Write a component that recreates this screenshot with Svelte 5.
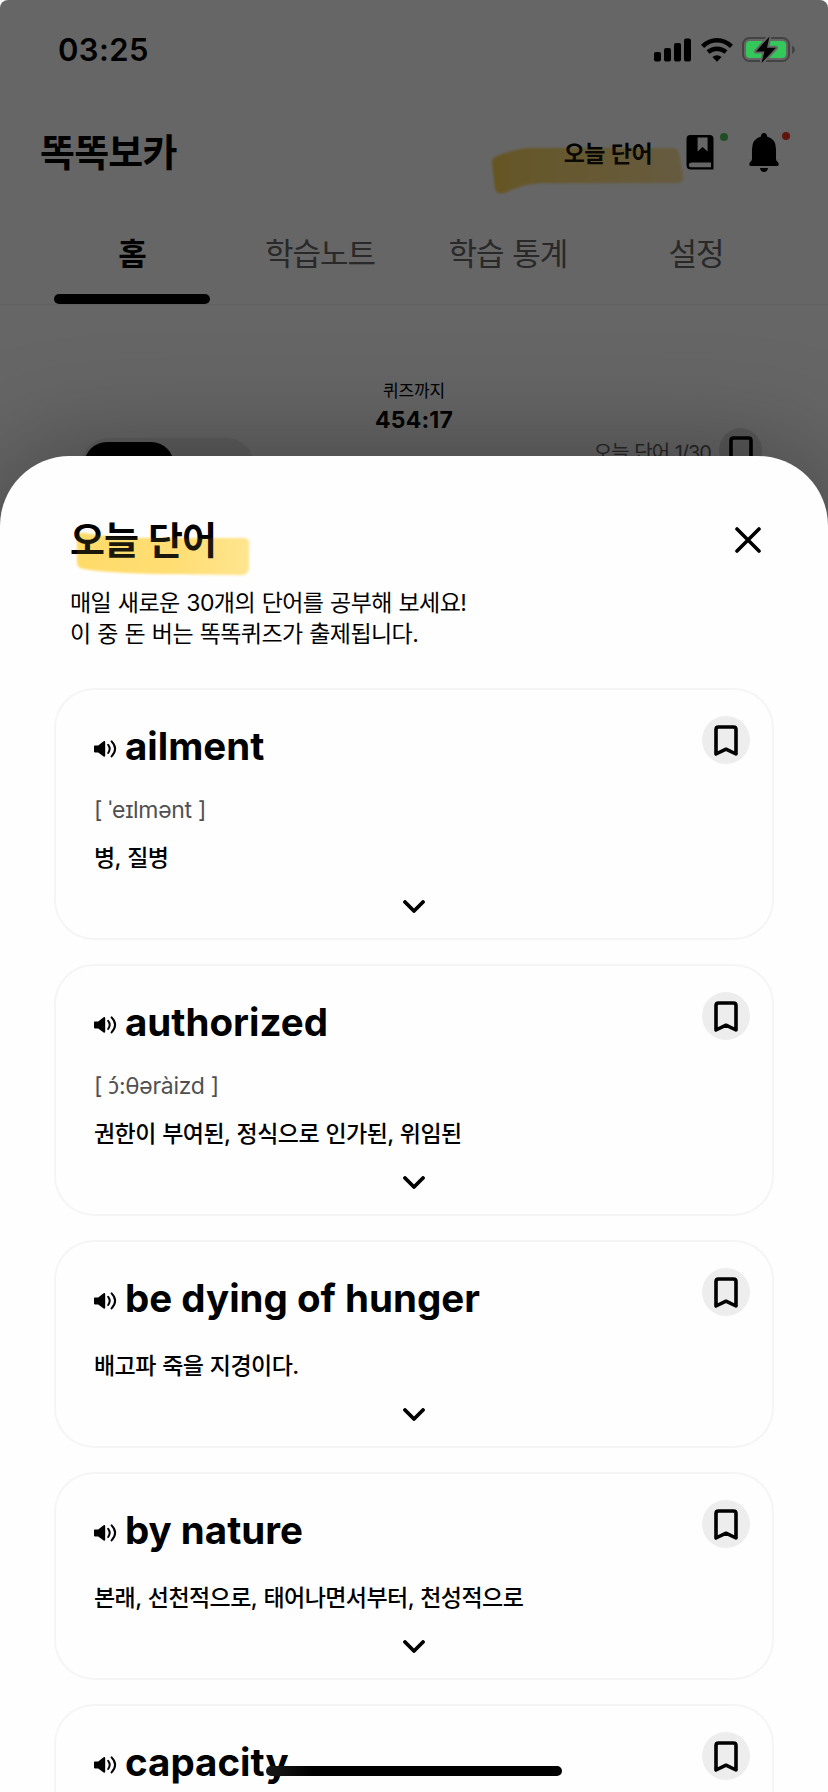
<script>
	const tabs = ['홈', '학습노트', '학습 통계', '설정'];
	let activeTab = $state(0);

	const words = [
		{ word: 'ailment', sound: '[ ˈeɪlmənt ]', meaning: '병, 질병' },
		{ word: 'authorized', sound: '[ ɔ́:θəràizd ]', meaning: '권한이 부여된, 정식으로 인가된, 위임된' },
		{ word: 'be dying of hunger', sound: '', meaning: '배고파 죽을 지경이다.' },
		{ word: 'by nature', sound: '', meaning: '본래, 선천적으로, 태어나면서부터, 천성적으로' },
		{ word: 'capacity', sound: '', meaning: '' },
	];

	/** Splits out letters with a combining accent: Inter does not place the mark on them. */
	/** @param {string} sound */
	function soundParts(sound) {
		return sound.normalize('NFC').split(/(.[\u0300-\u036f]+)/u);
	}
</script>

{#snippet bookmark()}
	<span class="bookmark">
		<svg width="24" height="31" viewBox="0 0 24 31" fill="none" stroke="#000" stroke-width="3.6" stroke-linejoin="round">
			<path d="M2 29V4.6Q2 2 4.6 2H19.4Q22 2 22 4.6V29L12 24.2Z" />
		</svg>
	</span>
{/snippet}

{#snippet headerMarker(cls)}
	<svg class={cls} width="196" height="52" viewBox="0 0 196 52" aria-hidden="true">
		<defs>
			<linearGradient id="header-ink" x1="0" x2="1">
				<stop offset="0" stop-color="#ffd352" />
				<stop offset="0.1" stop-color="#ffd968" />
				<stop offset="0.6" stop-color="#fedf84" />
				<stop offset="1" stop-color="#ffe5a2" />
			</linearGradient>
		</defs>
		<path d="M3 17Q3 13 8 11Q26 4 40 3H182Q189 3 190 8L194 32Q195 38 189 38H58Q42 38 30 42L15 48Q8 50 6 44Z" fill="url(#header-ink)" />
	</svg>
{/snippet}

{#snippet titleMarker(cls)}
	<svg class={cls} width="176" height="50" viewBox="0 0 176 50" aria-hidden="true">
		<defs>
			<linearGradient id="title-ink" x1="0" x2="1">
				<stop offset="0" stop-color="#ffdb69" />
				<stop offset="0.6" stop-color="#ffde75" />
				<stop offset="1" stop-color="#ffe590" />
			</linearGradient>
		</defs>
		<path d="M2 8Q2 3 9 4Q32 8 60 9H169Q174 9 174 14V40Q172 46 167 46L100 45Q40 45 9 40Q2 39 2 34Z" fill="url(#title-ink)" />
	</svg>
{/snippet}

<div class="screen">
	<div class="page">
		<header class="header">
			<h1>똑똑보카</h1>
			<div class="tools">
				<span class="today">
					{@render headerMarker('marker header-marker')}
					<span class="today-label">오늘 단어</span>
					{@render headerMarker('marker header-marker wash')}
				</span>
				<span class="tool book">
					<svg width="28" height="35" viewBox="0 0 28 35">
						<path fill-rule="evenodd" d="M4.5 0H23.5Q27.5 0 27.5 4V34.5H5Q0.5 34.5 0.5 30V4Q0.5 0 4.5 0ZM11.6 2.6V16.4L16.6 12L21.6 16.4V2.6ZM6 27.4Q2.8 27.4 2.8 29.9Q2.8 32.2 6 32.2H25V27.4Z" />
					</svg>
					<i class="dot green"></i>
				</span>
				<span class="tool bell">
					<svg width="30" height="39" viewBox="0 0 30 39">
						<path d="M15 0Q18 0 18 3.6Q27 6 27 16V26Q27 28 29 29.3Q31 33 27.5 33H2.5Q-1 33 1 29.3Q3 28 3 26V16Q3 6 12 3.6Q12 0 15 0ZM11 35H19Q18.5 39 15 39Q11.5 39 11 35Z" />
					</svg>
					<i class="dot red"></i>
				</span>
			</div>
		</header>

		<nav class="tabs">
			{#each tabs as tab, i}
				<button class="tab" class:active={i === activeTab} onclick={() => (activeTab = i)}>{tab}</button>
			{/each}
		</nav>

		<section class="quiz">
			<p class="quiz-label">퀴즈까지</p>
			<p class="quiz-time">454:17</p>
		</section>

		<section class="progress">
			<div class="toggle"><span class="knob"></span></div>
			<div class="count">
				<span class="count-label">오늘 단어 1/30</span>
				{@render bookmark()}
			</div>
		</section>
	</div>

	<div class="dim"></div>

	<div class="status">
		<span class="clock">03:25</span>
		<div class="signals">
			<svg width="37" height="24" viewBox="0 0 37 24">
				<rect x="0" y="14" width="7" height="9.4" rx="2" />
				<rect x="10" y="10" width="7" height="13.4" rx="2" />
				<rect x="20" y="5" width="7" height="18.4" rx="2" />
				<rect x="30" y="0.4" width="7" height="23" rx="2" />
			</svg>
			<svg width="32" height="24" viewBox="0 0 32 24">
				<g fill="none" stroke="#000" stroke-width="4.6">
					<path d="M1.6 8.4Q8 2.3 16 2.3T30.4 8.4" />
					<path d="M7 14Q11 10.7 16 10.7T25 14" />
				</g>
				<path d="M11.4 19Q16 15.4 20.6 19L16 23.8Z" />
			</svg>
			<svg width="54" height="28" viewBox="0 0 54 28">
				<rect x="1" y="2" width="46" height="23" rx="6.5" fill="none" stroke="#434343" stroke-width="2" />
				<path d="M50 9.5Q53 11 53 13.7T50 18Z" fill="#434343" />
				<rect x="4" y="5" width="40" height="17" rx="4" fill="#34c759" />
				<path d="M27.5 0.5L14 15.5H22.5L19.5 27L34 11.8H25Z" stroke="#666" stroke-width="4" stroke-linejoin="round" />
				<path d="M27.5 0.5L14 15.5H22.5L19.5 27L34 11.8H25Z" />
			</svg>
		</div>
	</div>

	<main class="sheet">
		<div class="sheet-head">
			<h2>
				{@render titleMarker('marker title-marker')}
				<span class="title-text">오늘 단어</span>
				{@render titleMarker('marker title-marker wash')}
			</h2>
			<button class="close" aria-label="닫기">
				<svg width="26" height="26" viewBox="0 0 26 26" fill="none" stroke="#000" stroke-width="3.6" stroke-linecap="round">
					<path d="M2 2L24 24M24 2L2 24" />
				</svg>
			</button>
		</div>
		<p class="intro">매일 새로운 30개의 단어를 공부해 보세요!<br />이 중 돈 버는 똑똑퀴즈가 출제됩니다.</p>

		<div class="cards">
			{#each words as item (item.word)}
				<article class="card">
					<div class="card-top">
						<svg class="speaker" width="23" height="18" viewBox="0 0 23 18">
							<path d="M0.8 5.4H4.2L9.6 1.2Q11.2 0.4 11.2 2V15.6Q11.2 17.2 9.6 16.4L4.2 12.4H0.8Q0 12.4 0 11.6V6.2Q0 5.4 0.8 5.4Z" />
							<path d="M14.2 4.8Q17.2 8.8 14.2 13M17.6 1.4Q24.6 8.8 17.6 16.4" fill="none" stroke="#000" stroke-width="2" stroke-linecap="round" />
						</svg>
						<h3>{item.word}</h3>
						{@render bookmark()}
					</div>
					{#if item.sound}
						<p class="sound">{#each soundParts(item.sound) as part, i}{#if i % 2}<span class="accented">{part}</span>{:else}{part}{/if}{/each}</p>
					{/if}
					<p class="meaning">{item.meaning}</p>
					<svg class="chevron" width="22" height="13" viewBox="0 0 22 13" fill="none" stroke="#000" stroke-width="3.8" stroke-linecap="round" stroke-linejoin="round">
						<path d="M2 2L11 11L20 2" />
					</svg>
				</article>
			{/each}
		</div>
	</main>

	<div class="home-bar"></div>
</div>

<style>
	:global(body) {
		margin: 0;
		background: #fff;
	}

	.screen {
		position: relative;
		width: 828px;
		height: 1792px;
		overflow: hidden;
		background: #fff;
		color: #000;
		font-family: Inter, 'Noto Sans CJK KR', sans-serif;
		font-optical-sizing: none;
	}

	h1,
	h2,
	h3,
	p {
		margin: 0;
	}

	button {
		padding: 0;
		border: 0;
		background: none;
		color: inherit;
		font: inherit;
	}

	svg {
		display: block;
		flex: none;
	}

	.page {
		height: 520px;
		padding-top: 112px;
		box-sizing: border-box;
	}

	.dim {
		position: absolute;
		inset: 0;
		border-radius: 8px 8px 0 0;
		background: rgba(0, 0, 0, 0.6);
	}

	/* Status bar, above the dimmed page */
	.status {
		position: absolute;
		inset: 0 0 auto 0;
		display: flex;
		align-items: center;
		justify-content: space-between;
		height: 100px;
		padding: 0 32px 0 58px;
		box-sizing: border-box;
	}

	.clock {
		font-size: 31px;
		font-weight: 600;
		line-height: 40px;
		letter-spacing: 0.4px;
	}

	.signals {
		display: flex;
		align-items: center;
		gap: 9.5px;
	}

	.header {
		display: flex;
		align-items: center;
		justify-content: space-between;
		height: 80px;
		padding: 0 49px 0 40px;
	}

	h1 {
		padding-bottom: 6px;
		font-size: 38px;
		font-weight: 700;
		letter-spacing: -0.8px;
	}

	.tools {
		display: flex;
		align-items: center;
	}

	.today {
		position: relative;
		margin-right: 34px;
		font-size: 23px;
		font-weight: 600;
		letter-spacing: -0.6px;
		word-spacing: 0.8px;
	}

	.today-label,
	.title-text {
		position: relative;
	}

	.marker {
		position: absolute;
		filter: blur(1px);
	}

	.wash {
		opacity: 0.1;
	}

	.header-marker {
		left: -75px;
		top: 10px;
	}

	.tool {
		position: relative;
	}

	.bell {
		margin-left: 35px;
	}

	.dot {
		position: absolute;
		width: 8px;
		height: 8px;
		border-radius: 50%;
	}

	.green {
		top: -2px;
		right: -14px;
		background: #52c45a;
	}

	.red {
		top: -1px;
		right: -11px;
		background: #f03528;
	}

	.tabs {
		display: flex;
		height: 112px;
		padding: 0 38px;
		border-bottom: 1px solid #f0f0f0;
	}

	.tab {
		position: relative;
		flex: 1;
		padding-top: 7px;
		color: #666;
		font-size: 31px;
		letter-spacing: -1px;
		word-spacing: 1px;
		text-align: center;
	}

	.tab.active {
		color: #000;
		font-weight: 700;
	}

	.tab.active::after {
		content: '';
		position: absolute;
		right: 16px;
		bottom: 0;
		left: 16px;
		height: 10px;
		border-radius: 5px;
		background: #000;
	}

	.quiz {
		padding-top: 73px;
		text-align: center;
	}

	.quiz-label {
		font-size: 17px;
		line-height: 26px;
		letter-spacing: -0.2px;
	}

	.quiz-time {
		font-size: 23px;
		font-weight: 700;
		line-height: 32px;
		letter-spacing: 0.2px;
	}

	.progress {
		display: flex;
		align-items: flex-start;
		justify-content: space-between;
		padding: 0 66px 0 81px;
	}

	.toggle {
		width: 173px;
		height: 54px;
		margin-top: 2px;
		border-radius: 27px;
		background: #eaeaea;
	}

	.knob {
		display: block;
		width: 90px;
		height: 46px;
		margin: 4px 3px;
		border-radius: 23px;
		background: #000;
	}

	.count {
		display: flex;
		align-items: center;
		margin-top: -8px;
		gap: 8px;
		color: #666;
		font-size: 20px;
		letter-spacing: -1px;
		word-spacing: 1px;
	}

	.bookmark {
		display: flex;
		align-items: center;
		justify-content: center;
		flex: none;
		width: 48px;
		height: 48px;
		border-radius: 50%;
		background: #ededed;
	}

	.count .bookmark {
		width: 43px;
		height: 46px;
		background: #dedede;
	}

	/* Word sheet */
	.sheet {
		position: absolute;
		inset: 456px 0 0 0;
		padding: 60px 54px 0;
		overflow: hidden;
		border-radius: 70px 70px 0 0;
		background: #fefefe;
		box-shadow: 0 0 112px rgba(0, 0, 0, 0.35);
	}

	.sheet-head {
		display: flex;
		align-items: center;
		justify-content: space-between;
		height: 48px;
		padding: 0 13px 0 16px;
	}

	h2 {
		position: relative;
		font-size: 38px;
		font-weight: 600;
		line-height: 48px;
		letter-spacing: -1px;
		word-spacing: 1.6px;
	}

	.title-marker {
		left: 5px;
		top: 13px;
	}

	.intro {
		margin-top: 24px;
		padding-left: 16px;
		font-size: 23px;
		line-height: 31px;
		letter-spacing: -0.58px;
		word-spacing: 0.8px;
	}

	.cards {
		display: flex;
		flex-direction: column;
		gap: 24px;
		margin-top: 38px;
	}

	.card {
		padding: 26px 22px 25px 38px;
		border: 2px solid #f5f5f5;
		border-radius: 40px;
	}

	.card-top {
		display: flex;
		height: 64px;
	}

	.speaker {
		margin-top: 24px;
	}

	h3 {
		flex: 1;
		margin-left: 8px;
		padding-top: 6px;
		font-size: 38.5px;
		font-weight: 700;
		line-height: 48px;
	}

	.sound {
		height: 44px;
		margin: 14px 0 -14px;
		color: #505050;
		font-size: 23px;
		line-height: 32px;
		letter-spacing: -0.3px;
	}

	.accented {
		font-family: 'Noto Sans', sans-serif;
		line-height: 1;
	}

	.meaning {
		min-height: 34px;
		padding-top: 17px;
		font-size: 23px;
		font-weight: 450;
		line-height: 34px;
		letter-spacing: -0.55px;
		word-spacing: 0.8px;
	}

	.chevron {
		margin: 25px auto 0;
		transform: translateX(-8px);
	}

	.home-bar {
		position: absolute;
		bottom: 16px;
		left: 266px;
		width: 296px;
		height: 10px;
		border-radius: 5px;
		background: linear-gradient(90deg, #1a1a1a, #000 16%);
	}
</style>
